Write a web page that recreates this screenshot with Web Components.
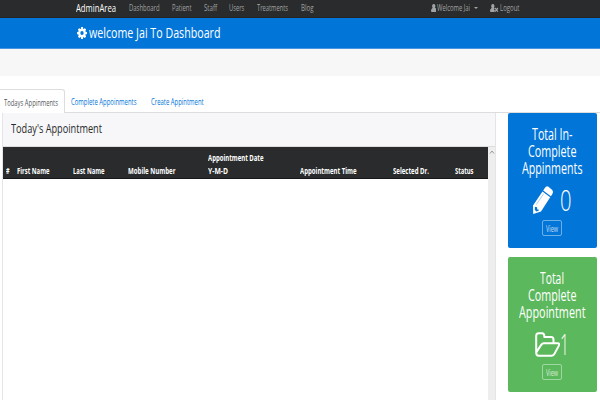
<!DOCTYPE html>
<html lang="en">
<head>
<meta charset="utf-8">
<title>Dashboard</title>
<style>
html,body{margin:0;height:100%;overflow:hidden;background:#fff}
body{font-family:"Open Sans","Noto Sans",sans-serif;color:#292b2c}
</style>
</head>
<body>
<admin-page></admin-page>
<script>
// Condensed label: text is stretched horizontally to the width given in "w".
class FitText extends HTMLElement{
  connectedCallback(){
    const r=this.attachShadow({mode:'open'});
    r.innerHTML='<style>:host{display:block;flex:none;white-space:nowrap}span{display:inline-block;transform-origin:0 50%}</style><span><slot></slot></span>';
    const w=+this.getAttribute('w');
    this.style.width=w+'px';
    const s=r.querySelector('span');
    s.style.transform='scaleX('+w/s.getBoundingClientRect().width+')';
  }
}
const ICONS={
 cog:['0 0 1536 1536','<path fill-rule="evenodd" d="M1024 768a256 256 0 1 0-512 0 256 256 0 0 0 512 0zm512-109v222c0 16-12 30-28 33l-185 28c-11 32-23 62-39 91 35 50 70 97 108 141 5 6 9 14 9 23s-3 16-8 22c-24 33-160 181-195 181-8 0-16-3-23-7l-138-108c-29 15-60 28-91 38-7 61-13 127-29 186-4 16-17 27-33 27H662c-16 0-31-12-33-28l-28-184a735 735 0 0 1-91-37l-141 107c-6 5-14 7-22 7s-17-3-23-9c-53-48-123-111-165-169a35 35 0 0 1 1-43c34-46 71-90 105-137-17-32-31-64-40-96L42 922a34 34 0 0 1-28-33V667c0-16 12-31 27-33l186-28c9-31 22-62 39-92-35-50-71-97-108-141a35 35 0 0 1-8-23c0-8 3-16 8-22 24-33 160-182 195-182 8 0 16 3 23 8l138 108c29-15 60-28 91-38 7-61 13-127 29-186 4-16 17-27 33-27h222c16 0 31 12 33 28l28 184c31 10 62 22 91 37l142-107c6-5 13-7 21-7s17 3 23 9c53 49 123 111 165 170 5 5 7 12 7 20s-3 15-8 22c-34 46-71 90-105 137 17 32 31 64 40 95l183 28c16 2 28 17 28 33z"/>'],
 user:['0 0 10 12','<path d="M5 0a3 3.2 0 0 1 2 5.5C9 5.8 10 7.500 10 10q0 2-1.600 2H1.600Q0 12 0 10 0 7.500 3 5.500A3 3.200 0 0 1 5 0z"/>'],
 out:['0 0 15 12','<path d="M5 0a3 3.200 0 0 1 2 5.500l1.500.8L7 8l2 2-1.500 2h-6Q0 12 0 10 0 7.500 3 5.500A3 3.200 0 0 1 5 0z"/><path d="M9 6l5 5.500M14 6l-5 5.500" stroke="currentColor" stroke-width="2"/>'],
 pencil:['0 0 20 29','<path fill-rule="evenodd" d="M11.800 2.200Q13.600-.8 15.500.9l3.500 3q1.600 1.700.5 4L17.900 10.500l-7.700-5.800zM9.500 5.700l7.700 6L8 26.500.2 29 0 20.300zM1.900 21.600l-.1 3 1.400 1.800 2.300-.7.500-1.100-1.700-.2-.2-2.500z"/><path d="M3.300 19.200l7.400-11.300" stroke="#69aee9" stroke-width=".6"/>'],
 folder:['0 0 25 25','<path fill="none" stroke="currentColor" stroke-width="2" stroke-linejoin="round" d="M1.200 20.500V4Q1.200 1.200 3.500 1.200h3.600Q9.300 1.200 9.300 4v.9h6.900q2.300 0 2.300 2.800v3.600M1.200 20.500Q1.200 23.800 3.800 23.800H16.300q1.800 0 3-1.700l4.300-8q1.400-2.800-.8-2.800H9q-1.800 0-3 1.800z"/>']
};
class GlyphIcon extends HTMLElement{
  connectedCallback(){
    const [v,p]=ICONS[this.getAttribute('name')];
    this.attachShadow({mode:'open'}).innerHTML=`<style>:host{display:block;flex:none}svg{display:block;width:100%;height:100%;fill:currentColor}</style><svg viewBox="${v}" preserveAspectRatio="none">${p}</svg>`;
  }
}
class NavBar extends HTMLElement{
  connectedCallback(){
    this.attachShadow({mode:'open'}).innerHTML=`<style>
    :host{display:flex;box-sizing:border-box;height:18px;padding-left:76px;background:#292b2c;color:#a2a3a4;font-size:9.300px;line-height:16px;border-bottom:1px solid #232323}
    .b{color:#fff;font-size:11px;line-height:15px;margin-right:12.500px}
    .u{width:5.500px;height:8px;margin:3.500px 1.200px 0 0}.o{width:8.500px;height:8px;margin:3.500px 1.500px 0 0}
    i{border:2px solid transparent;border-top-color:currentColor;height:0;margin:7px 12.500px 0 3.500px}
    </style>
    <fit-text class="b" w="40">AdminArea</fit-text>
    <fit-text w="30.500" style="margin-right:12.700px">Dashboard</fit-text>
    <fit-text w="19.500" style="margin-right:12.800px">Patient</fit-text>
    <fit-text w="13" style="margin-right:12.200px">Staff</fit-text>
    <fit-text w="15.300" style="margin-right:12.700px">Users</fit-text>
    <fit-text w="31" style="margin-right:12.800px">Treatments</fit-text>
    <fit-text w="12.500" style="margin-right:117.200px">Blog</fit-text>
    <glyph-icon class="u" name="user"></glyph-icon><fit-text w="33">Welcome Jai</fit-text><i></i>
    <glyph-icon class="o" name="out"></glyph-icon><fit-text w="19.500">Logout</fit-text>`;
  }
}
class PageTitle extends HTMLElement{
  connectedCallback(){
    this.attachShadow({mode:'open'}).innerHTML=`<style>
    :host{display:flex;box-sizing:border-box;height:31px;padding-left:76.500px;background:#0275d8;color:#fff;font-size:15px;line-height:28px;border-bottom:1px solid #4697e0}
    glyph-icon{width:10px;height:12px;margin:8.500px 2.500px 0 0}</style>
    <glyph-icon name="cog"></glyph-icon><fit-text w="131.500"><slot></slot></fit-text>`;
  }
}
class TabStrip extends HTMLElement{
  connectedCallback(){
    this.attachShadow({mode:'open'}).innerHTML=`<style>
    :host{display:flex;box-sizing:border-box;height:24px;margin-top:13px;border-bottom:1px solid #ddd;font-size:9.200px;line-height:26px;color:#0275d8}
    .a{box-sizing:border-box;width:65px;height:24px;border:1px solid #ddd;border-width:1px 1px 0 0;border-radius:0 3px 0 0;background:#fff;color:#55595c;padding-left:3.500px;line-height:25px}
    .t{margin-left:6px}.t+.t{margin-left:14px}</style>
    <div class="a"><fit-text w="54">Todays Appinments</fit-text></div>
    <fit-text class="t" w="65.500">Complete Appoinments</fit-text>
    <fit-text class="t" w="52.700">Create Appintment</fit-text>`;
  }
}
class AppointmentPanel extends HTMLElement{
  connectedCallback(){
    const cell=(w,t)=>`<fit-text w="${w}">${t}</fit-text>`;
    this.attachShadow({mode:'open'}).innerHTML=`<style>
    :host{display:flex;flex-direction:column;box-sizing:border-box;width:494px;height:287px;border:1px solid #e5e5e6;border-width:0 1px}
    h4{margin:0;height:34px;box-sizing:border-box;padding-left:8px;background:#f7f7f9;font-weight:400;font-size:13.500px;line-height:31px;border-bottom:1px solid #dcdcde}
    .body{display:flex;flex:1}
    .table{flex:1}
    .head{display:grid;grid-template-columns:11.500px 56px 55px 80px 92px 93px 62px 1fr;align-items:end;box-sizing:border-box;height:32px;padding:0 0 1px 2.500px;background:#292b2c;color:#fff;font-weight:700;font-size:8.400px;line-height:13px;border-bottom:1px solid #151617}
    .bar{width:7.500px;background:#eee}
    .bar svg{display:block;margin:2px 0 0 1px}</style>
    <h4><fit-text w="91">Today's Appointment</fit-text></h4>
    <div class="body"><div class="table"><div class="head">
    ${cell(3.500,'#')}${cell(32.500,'First Name')}${cell(31.500,'Last Name')}${cell(47.500,'Mobile Number')}
    <div>${cell(55.500,'Appointment Date')}${cell(20,'Y-M-D')}</div>
    ${cell(56.500,'Appointment Time')}${cell(36,'Selected Dr.')}${cell(18.500,'Status')}
    </div></div><div class="bar"><svg width="6" height="6"><path d="M1 4.500l2-2.500 2 2.500" fill="none" stroke="#999"/></svg></div></div>`;
  }
}
class StatCard extends HTMLElement{
  connectedCallback(){
    const l=this.getAttribute('lines').split('|').map(s=>s.split(':'));
    this.attachShadow({mode:'open'}).innerHTML=`<style>
    :host{display:flex;flex-direction:column;align-items:center;box-sizing:border-box;width:89px;height:135px;padding-top:12.500px;border-radius:2px;color:#fff;font-size:15.500px;line-height:17px}
    .n{display:flex;justify-content:center;align-items:center;height:32px;margin-top:7.500px}
    .n fit-text{font-size:30px;line-height:32px;font-weight:300}
    .v{box-sizing:border-box;width:20px;height:16px;margin-top:4px;padding-left:3px;border:1px solid rgba(255,255,255,.42);border-radius:2px;font-size:8.500px;line-height:15px;color:rgba(255,255,255,.75)}</style>
    ${l.map(([t,w])=>`<fit-text w="${w}">${t}</fit-text>`).join('')}
    <div class="n"><slot></slot><fit-text w="${this.getAttribute('nw')}">${this.getAttribute('value')}</fit-text></div>
    <div class="v"><fit-text w="12">View</fit-text></div>`;
  }
}
class AdminPage extends HTMLElement{
  connectedCallback(){
    this.attachShadow({mode:'open'}).innerHTML=`<style>
    :host{display:block;width:600px;height:400px;overflow:hidden}
    .sub{height:27px;background:#f7f7f7}
    .main{display:flex;padding-left:2px}
    aside{display:flex;flex-direction:column;gap:9px;margin-left:11.500px}
    .p{background:#0275d8}.s{background:#5cb85c}
    .p glyph-icon{width:20px;height:28px;margin:0 6.500px 0 0}
    .s glyph-icon{width:25px;height:25px;margin:0 0 0 0}</style>
    <nav-bar></nav-bar><page-title>welcome Jai To Dashboard</page-title><div class="sub"></div><tab-strip></tab-strip>
    <div class="main"><appointment-panel></appointment-panel><aside>
    <stat-card class="p" lines="Total In-:40.500|Complete:48.500|Appinments:60.500" value="0" nw="11.500"><glyph-icon name="pencil"></glyph-icon></stat-card>
    <stat-card class="s" lines="Total:24|Complete:48.500|Appointment:66.500" value="1" nw="9"><glyph-icon name="folder"></glyph-icon></stat-card>
    </aside></div>`;
  }
}
[['fit-text',FitText],['glyph-icon',GlyphIcon],['nav-bar',NavBar],['page-title',PageTitle],['tab-strip',TabStrip],['appointment-panel',AppointmentPanel],['stat-card',StatCard],['admin-page',AdminPage]].forEach(([n,c])=>customElements.define(n,c));
</script>
</body>
</html>
